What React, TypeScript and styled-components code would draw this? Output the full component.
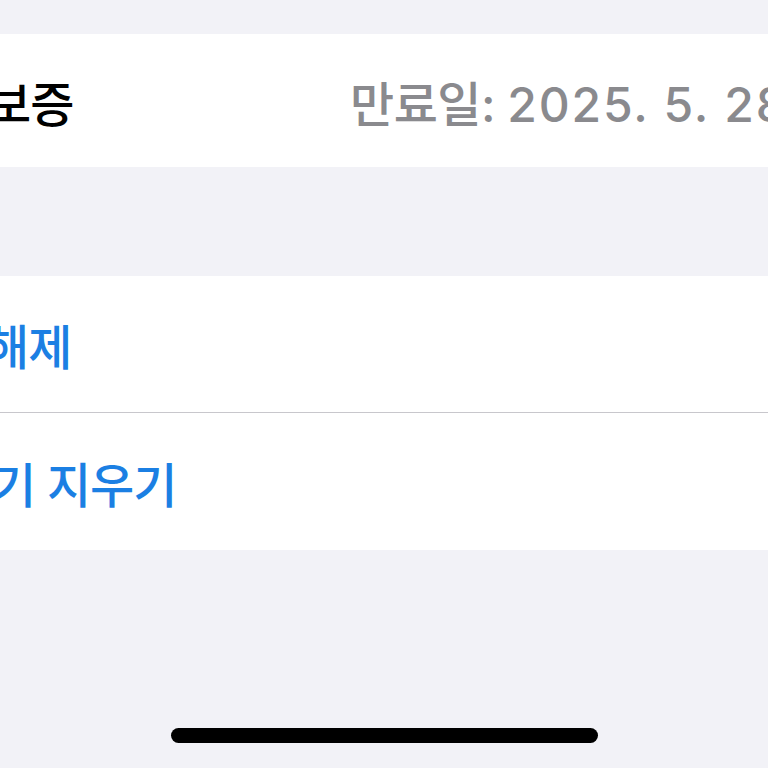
import styled, { createGlobalStyle } from "styled-components";

const GlobalStyle = createGlobalStyle`
  html, body {
    margin: 0;
    padding: 0;
    background: #f2f2f7;
    overflow: hidden;
  }
  body {
    font-family: Inter, "Noto Sans CJK KR", "Noto Sans", sans-serif;
  }
`;

const Screen = styled.div`
  width: 768px;
  height: 768px;
  overflow: hidden;
  display: flex;
  flex-direction: column;
  background: #f2f2f7;
`;

const Group = styled.section<{ $top: number }>`
  margin-top: ${({ $top }) => $top}px;
  margin-right: -75px;
  background: #ffffff;
  display: flex;
  flex-direction: column;
`;

const Row = styled.div<{ $height: number }>`
  height: ${({ $height }) => $height}px;
  display: flex;
  align-items: center;
  justify-content: space-between;
  padding-right: 40px;
  white-space: nowrap;
`;

const Divider = styled.div`
  height: 1px;
  background: #c8c7cc;
`;

const Label = styled.span<{ $tone?: "plain" | "action"; $clip: number }>`
  margin-left: ${({ $clip }) => -$clip}px;
  font-size: 48px;
  font-weight: 500;
  letter-spacing: -1px;
  color: ${({ $tone }) => ($tone === "action" ? "#1b7fe3" : "#000000")};
`;

const Value = styled.span`
  font-size: 48px;
  font-weight: 500;
  letter-spacing: -0.5px;
  color: #8a8a8e;
`;

const Digits = styled.span`
  letter-spacing: 1.8px;
`;

const Spacer = styled.div`
  flex: 1;
`;

const HomeIndicator = styled.div`
  align-self: center;
  width: 427px;
  height: 15px;
  margin-bottom: 25px;
  border-radius: 8px;
  background: #000000;
`;

export default function App() {
  return (
    <>
      <GlobalStyle />
      <Screen>
        <Group $top={34}>
          <Row $height={133}>
            <Label $clip={13}>보증</Label>
            <Value>
              만료일: <Digits>2025. 5. 28.</Digits>
            </Value>
          </Row>
        </Group>
        <Group $top={109}>
          <Row $height={136}>
            <Label $tone="action" $clip={15}>
              해제
            </Label>
          </Row>
          <Divider />
          <Row $height={137}>
            <Label $tone="action" $clip={8}>
              기 지우기
            </Label>
          </Row>
        </Group>
        <Spacer />
        <HomeIndicator />
      </Screen>
    </>
  );
}
